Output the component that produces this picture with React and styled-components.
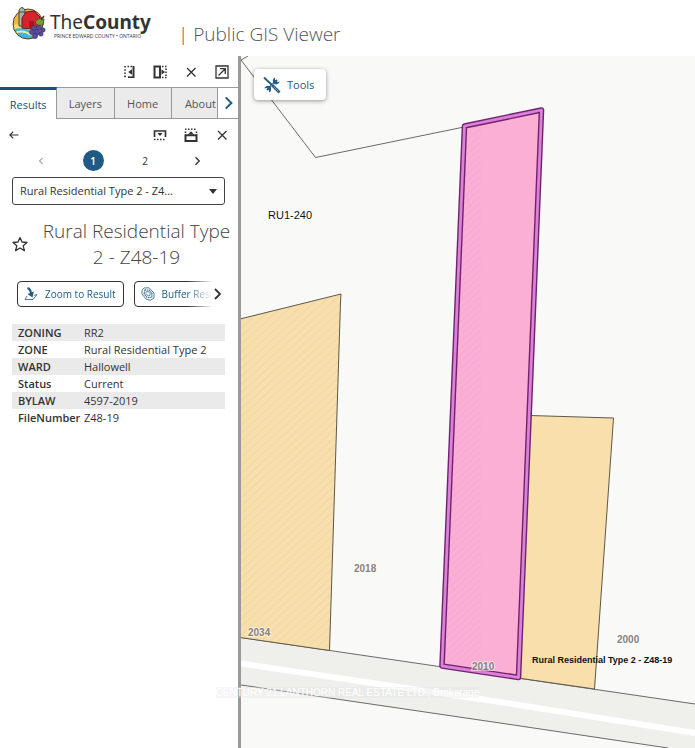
import React, { useState } from "react";
import styled, { createGlobalStyle } from "styled-components";

const rows = [
  ["ZONING", "RR2"],
  ["ZONE", "Rural Residential Type 2"],
  ["WARD", "Hallowell"],
  ["Status", "Current"],
  ["BYLAW", "4597-2019"],
  ["FileNumber", "Z48-19"],
];

const tabs = ["Results", "Layers", "Home", "About"];

const Logo = () => (
  <svg width="34" height="34" viewBox="0 0 34 34" aria-hidden="true">
    <defs>
      <clipPath id="badge">
        <circle cx="16" cy="18" r="15" />
      </clipPath>
    </defs>
    <g clipPath="url(#badge)">
      <rect width="34" height="34" fill="#f0b83c" />
      <path d="M0 20 Q8 16 16 21 T34 20 V34 H0Z" fill="#f6dc72" />
      <path d="M1 24 Q9 20 17 24 L22 34 H4Z" fill="#42b5d8" />
      <path d="M3 27 Q11 23 19 29" stroke="#f5e9a0" strokeWidth="2" fill="none" />
    </g>
    <circle cx="16" cy="18" r="15" fill="none" stroke="#4b4335" strokeWidth="1" />
    <path d="M7 20 V4 Q10 -1 13 4 V20Z" fill="#a9b6a0" stroke="#444" strokeWidth="1" />
    <path d="M7 6 H13" stroke="#444" strokeWidth="1" />
    <path d="M10 22 V12 L14 6 L22 5 L28 11 V21 L19 23Z" fill="#d8232e" stroke="#6b1b20" strokeWidth="1" />
    <path d="M17 22 V15 H22 V21" fill="#a9141f" />
    <path d="M23 16 Q26 11 32 13 L31 19 Q26 21 23 16Z" fill="#7e9a35" stroke="#4a5427" strokeWidth="1" />
    <path d="M29 14 L32 10" stroke="#4a4335" strokeWidth="1.5" />
    <g fill="#5a4c9c" stroke="#312a5e" strokeWidth="0.5">
      <circle cx="22" cy="22" r="2.6" />
      <circle cx="27" cy="22" r="2.6" />
      <circle cx="31" cy="24" r="2.2" />
      <circle cx="20" cy="26" r="2.6" />
      <circle cx="25" cy="26" r="2.6" />
      <circle cx="29" cy="28" r="2.2" />
      <circle cx="23" cy="30" r="2.6" />
    </g>
  </svg>
);

const Icon = ({ children, size = 16 }) => (
  <svg
    width={size}
    height={size}
    viewBox="0 0 16 16"
    fill="none"
    stroke="currentColor"
    strokeWidth="1.3"
    aria-hidden="true"
  >
    {children}
  </svg>
);

const DockIcon = () => (
  <Icon>
    <path d="M4 2 V14" strokeWidth="1.6" strokeDasharray="1.6 1.6" />
    <path d="M6.5 2.5 H12" strokeWidth="1.5" strokeDasharray="1.6 1.4" />
    <path d="M12.5 2 V14" strokeWidth="2" />
    <path d="M7 13.2 H12.5" strokeWidth="1.6" />
    <path d="M11 5.2 V10.8 L7.2 8Z" fill="currentColor" stroke="none" />
  </Icon>
);

const ExpandIcon = () => (
  <Icon>
    <path d="M2.5 2.5 H8 V13.5 H2.5Z" strokeWidth="2" />
    <path d="M10 2.5 H15 M10 13.5 H15 M14 4.5 V12" strokeWidth="1.6" strokeDasharray="1.5 1.5" />
    <path d="M9.5 5.2 V10.8 L13 8Z" fill="currentColor" stroke="none" />
  </Icon>
);

const CloseIcon = () => (
  <Icon>
    <path d="M4 4 L12.5 12.5 M12.5 4 L4 12.5" />
  </Icon>
);

const PopOutIcon = () => (
  <Icon>
    <path d="M2 2 H14 V14 H2Z M4.5 11.5 L11 5 M6 4.7 H11.3 V10" />
  </Icon>
);

const CollapseIcon = () => (
  <Icon>
    <path d="M2.5 10 V4 H13.5 V10" strokeWidth="1.7" />
    <path d="M2 12.5 H14" strokeWidth="1.5" strokeDasharray="1.5 1.5" />
    <path d="M5.3 6 H10.7 L8 9Z" fill="currentColor" stroke="none" />
  </Icon>
);

const RaiseIcon = () => (
  <Icon>
    <path d="M2.5 8.3 H13.5 V14 H2.5Z" strokeWidth="2" />
    <path d="M2 2.3 H14 M2.5 4.5 V8 M13.5 4.5 V8" strokeWidth="1.6" strokeDasharray="1.5 1.5" />
    <path d="M5 7.5 H11 L8 4.2Z" fill="currentColor" stroke="none" />
  </Icon>
);

const Chevron = ({ left, size = 16, heavy }) => (
  <Icon size={size}>
    <path d={left ? "M10 4 L6 8 L10 12" : "M6 3 L11 8 L6 13"} strokeWidth={heavy ? 1.8 : 1.5} />
  </Icon>
);

const ToolsIcon = () => (
  <svg width="18" height="18" viewBox="0 0 18 18" fill="none" stroke="#215b84" aria-hidden="true">
    <path d="M4 14 L14 4" strokeWidth="2.2" />
    <path d="M12 1.5 A3.5 3.5 0 1 0 16.7 5.5 L14 6.2 L12 4.3Z" fill="#215b84" stroke="none" />
    <path d="M6 16.5 A3.5 3.5 0 1 0 1.3 12.5 L4 11.8 L6 13.7Z" fill="#215b84" stroke="none" />
    <path d="M1 1.5 L9 9" strokeWidth="1.8" />
    <path d="M9 9 L16.5 16.5" stroke="#fff" strokeWidth="4" />
    <path d="M9 9 L16.5 16.5" strokeWidth="2.8" />
    <path d="M10.5 10.5 L15.5 15.5" stroke="#8fb0c6" strokeWidth="0.8" />
  </svg>
);

const ZoomIcon = () => (
  <svg width="14" height="14" viewBox="0 0 14 14" fill="none" stroke="#215b84" aria-hidden="true">
    <path d="M3 9 L1 12.5 H9 L13 7.5 L10 8.5" strokeWidth="0.8" />
    <path d="M3.5 1 Q6.5 2 7 6" strokeWidth="2" />
    <path d="M3.5 7 L9.8 4.5 L8.5 10.5Z" fill="#215b84" stroke="none" />
  </svg>
);

const BufferIcon = () => (
  <svg width="14" height="14" viewBox="0 0 14 14" fill="none" stroke="#215b84" aria-hidden="true">
    <path d="M3 1 L8 0.8 L13 6 L13 11 L9.5 13.3 L5 12 L1 7 L1 3Z" strokeWidth="0.8" />
    <path d="M4 3 L8 3 L11 6.5 L10.7 10 L8.5 11 L5.5 9.8 L3 6.5Z" strokeWidth="1.2" strokeDasharray="1.2 0.7" />
    <path d="M5.3 4.7 H7.8 L9.3 7 L8.5 9 L6.5 8.5 L4.8 6.5Z" strokeWidth="0.7" fill="#fff" />
  </svg>
);

const ParcelMap = () => (
  <MapDrawing viewBox="241 56 454 692" preserveAspectRatio="xMinYMin slice" role="img" aria-label="Parcel map">
    <defs>
      <pattern id="tanHatch" width="6" height="6" patternUnits="userSpaceOnUse" patternTransform="rotate(48)">
        <path d="M3 0 V6" stroke="#ecd6a6" strokeWidth="1" />
      </pattern>
      <pattern id="pinkHatch" width="5" height="5" patternUnits="userSpaceOnUse" patternTransform="rotate(48)">
        <path d="M2 0 V5" stroke="#f3a8d0" strokeWidth="1" />
      </pattern>
    </defs>
    <rect x="241" y="56" width="454" height="692" fill="#f9f9f7" />
    <path d="M241 637.5 L695 704 V752 L241 685Z" fill="#eff0eb" />
    <path d="M241 663.5 L500 702 L695 733" stroke="#fff" strokeWidth="6" fill="none" />
    <g fill="none" stroke="#6a6a66" strokeWidth="1">
      <path d="M248 56 L241 60 L315.5 157.5 L464 127" />
      <path d="M241 685 L500 723 L668 748" />
      <path d="M241 637.5 L695 704" />
    </g>
    <path d="M240 319 L341 294 L340.5 302 L329.5 650.5 L240 637.5Z" fill="#f8dfac" />
    <path d="M240 319 L341 294 L329.5 650.5 L240 637.5Z" fill="url(#tanHatch)" />
    <g stroke="#5e584a" strokeWidth="1">
      <path d="M240 319 L341 294 L340.5 302 L329.5 650.5 L240 637.5Z" fill="none" />
      <path d="M530 415.5 L613.5 418 L594.5 689 L518 678Z" fill="#f8dfab" />
    </g>
    <path d="M464.5 126 L541.5 110 L518.5 677.5 L442 666Z" fill="#fcafd5" />
    <path d="M465 126 L481 123 V670 L442 666Z" fill="url(#pinkHatch)" />
    <g fill="none" strokeLinejoin="round">
      <path d="M464.5 126 L541.5 110 L518.5 677.5 L442 666Z" stroke="#73206f" strokeWidth="5.6" />
      <path d="M464.5 126 L541.5 110 L518.5 677.5 L442 666Z" stroke="#da82d8" strokeWidth="2.8" />
    </g>
    <MapLabel x="268" y="219">RU1-240</MapLabel>
    <MapLabel x="354" y="572" $muted>2018</MapLabel>
    <MapLabel x="248" y="636" $muted>2034</MapLabel>
    <MapLabel x="472" y="670" $muted>2010</MapLabel>
    <MapLabel x="617" y="643" $muted>2000</MapLabel>
    <MapLabel x="532" y="663" $strong>Rural Residential Type 2 - Z48-19</MapLabel>
  </MapDrawing>
);

const App = () => {
  const [tab, setTab] = useState("Results");
  const [page, setPage] = useState(1);

  return (
    <Page>
      <GlobalStyle />
      <Header>
        <Logo />
        <Brand>
          <BrandName>
            The<b>County</b>
          </BrandName>
          <BrandSub>PRINCE EDWARD COUNTY • ONTARIO</BrandSub>
        </Brand>
        <SiteTitle>| Public GIS Viewer</SiteTitle>
      </Header>
      <Body>
        <Sidebar>
          <Toolbar>
            <IconButton aria-label="Dock panel"><DockIcon /></IconButton>
            <IconButton aria-label="Expand panel"><ExpandIcon /></IconButton>
            <IconButton aria-label="Close panel"><CloseIcon /></IconButton>
            <IconButton aria-label="Pop out"><PopOutIcon /></IconButton>
          </Toolbar>
          <Tabs>
            {tabs.map((name) => (
              <Tab key={name} $active={tab === name} onClick={() => setTab(name)}>
                {name}
              </Tab>
            ))}
            <TabScroll aria-label="More tabs"><Chevron size={18} heavy /></TabScroll>
          </Tabs>
          <Toolbar>
            <BackButton aria-label="Back">
              <Icon size={12}><path d="M3 8 H14 M7 3.5 L2.5 8 L7 12.5" strokeWidth="1.6" /></Icon>
            </BackButton>
            <IconButton aria-label="Collapse results"><CollapseIcon /></IconButton>
            <IconButton aria-label="Raise results"><RaiseIcon /></IconButton>
            <IconButton aria-label="Close results"><CloseIcon /></IconButton>
          </Toolbar>
          <Pager>
            <PageButton disabled={page === 1} onClick={() => setPage(1)} aria-label="Previous page">
              <Chevron left size={12} />
            </PageButton>
            <PageButton $current={page === 1} onClick={() => setPage(1)}>1</PageButton>
            <PageButton $current={page === 2} onClick={() => setPage(2)}>2</PageButton>
            <PageButton onClick={() => setPage(2)} aria-label="Next page">
              <Chevron size={12} heavy />
            </PageButton>
          </Pager>
          <SelectBox>
            <Select aria-label="Result">
              <option>Rural Residential Type 2 - Z4...</option>
            </Select>
            <svg width="8" height="5" viewBox="0 0 8 5" aria-hidden="true">
              <path d="M0 0 H8 L4 5Z" fill="#333" />
            </svg>
          </SelectBox>
          <ResultHead>
            <IconButton aria-label="Add to favourites">
              <Icon>
                <path
                  d="M8 1.5 L10 6 L15 6.5 L11.2 9.8 L12.4 14.6 L8 12 L3.6 14.6 L4.8 9.8 L1 6.5 L6 6Z"
                  strokeLinejoin="round"
                />
              </Icon>
            </IconButton>
            <ResultTitle>Rural Residential Type 2 - Z48-19</ResultTitle>
          </ResultHead>
          <Actions>
            <ActionList>
              <ActionButton><ZoomIcon />Zoom to Result</ActionButton>
              <ActionButton><BufferIcon />Buffer Results</ActionButton>
            </ActionList>
            <ActionScroll aria-label="More actions"><Chevron heavy /></ActionScroll>
          </Actions>
          <Table>
            <tbody>
              {rows.map(([name, value]) => (
                <tr key={name}>
                  <th scope="row">{name}</th>
                  <td>{value}</td>
                </tr>
              ))}
            </tbody>
          </Table>
        </Sidebar>
        <MapArea>
          <ParcelMap />
          <ToolsButton><ToolsIcon />Tools</ToolsButton>
        </MapArea>
      </Body>
      <Watermark>
        <span>CENTURY 21 LANTHORN REAL ESTATE LTD., Brokerage</span>
      </Watermark>
    </Page>
  );
};
export default App;

const GlobalStyle = createGlobalStyle`
  * {
    box-sizing: border-box;
  }
  body {
    margin: 0;
    background: #fff;
    color: #333;
    font-family: "Open Sans", "Noto Sans", sans-serif;
    font-size: 11px;
  }
  button, select {
    font: inherit;
    color: inherit;
    margin: 0;
    padding: 0;
    border: 0;
    background: none;
  }
`;
const Page = styled.div`
  position: relative;
  display: flex;
  flex-direction: column;
  min-height: 100vh;
`;
const Header = styled.header`
  display: flex;
  height: 56px;
  padding: 6px 12px 0;
`;
const Brand = styled.div`
  display: flex;
  flex-direction: column;
  width: 132px;
  padding: 5px 0 0 4px;
`;
const BrandName = styled.div`
  font-family: "Noto Sans", sans-serif;
  font-size: 19px;
  line-height: 22px;
  color: #333;
  b {
    font-weight: 700;
  }
`;
const BrandSub = styled.div`
  padding-left: 4px;
  font-size: 5px;
  line-height: 6px;
  white-space: nowrap;
`;
const SiteTitle = styled.h1`
  margin: 0;
  padding-top: 15px;
  font-size: 19px;
  font-weight: 300;
  line-height: 26px;
  white-space: nowrap;
  color: #555;
`;
const Body = styled.div`
  display: flex;
  flex: 1;
`;
const Sidebar = styled.aside`
  flex: none;
  width: 241px;
  border-right: 3px solid #999;
`;
const Toolbar = styled.div`
  display: flex;
  align-items: center;
  justify-content: flex-end;
  gap: 15px;
  height: 31px;
  padding: 0 8px;
`;
const IconButton = styled.button`
  display: flex;
  flex: none;
  width: 16px;
  height: 16px;
`;
const BackButton = styled(IconButton)`
  align-items: center;
  margin-right: auto;
`;
const Tabs = styled.div`
  display: flex;
  height: 32px;
`;
const Tab = styled.button`
  flex: 1 0 57px;
  height: 32px;
  border-top: ${(p) => (p.$active ? "3px solid #1d5078" : "1px solid #999")};
  border-right: 1px solid #999;
  border-bottom: ${(p) => (p.$active ? "0" : "1px solid #999")};
  background: ${(p) => (p.$active ? "#fff" : "#ebebeb")};
  color: ${(p) => (p.$active ? "#1d5078" : "#555")};
  &:nth-child(4) {
    flex: 1 1 46px;
    min-width: 0;
    padding-left: 12px;
  }
`;
const TabScroll = styled.button`
  display: flex;
  flex: none;
  align-items: center;
  justify-content: center;
  width: 20px;
  border-top: 1px solid #999;
  border-bottom: 1px solid #999;
  color: #215b84;
`;
const Pager = styled.nav`
  display: grid;
  grid-template-columns: repeat(4, 52px);
  justify-items: center;
  padding: 0 15px;
`;
const PageButton = styled.button`
  display: flex;
  align-items: center;
  justify-content: center;
  width: 21px;
  height: 21px;
  border-radius: 50%;
  background: ${(p) => (p.$current ? "#1f5a84" : "none")};
  color: ${(p) => (p.$current ? "#fff" : "#333")};
  font-size: 10px;
  font-weight: ${(p) => (p.$current ? 600 : 400)};
  &:disabled {
    color: #aaa;
  }
`;
const SelectBox = styled.div`
  display: flex;
  align-items: center;
  height: 28px;
  margin: 6px 13px 0 12px;
  padding-right: 7px;
  border: 1px solid #444;
  border-radius: 3px;
`;
const Select = styled.select`
  appearance: none;
  flex: 1;
  min-width: 0;
  height: 26px;
  padding: 0 0 2px 7px;
`;
const ResultHead = styled.div`
  display: flex;
  align-items: center;
  gap: 12px;
  margin-top: 13px;
  padding: 0 5px 0 12px;
`;
const ResultTitle = styled.h2`
  flex: 1;
  margin: 0;
  font-size: 19px;
  font-weight: 300;
  line-height: 26px;
  text-align: center;
  color: #444;
`;
const Actions = styled.div`
  display: flex;
  align-items: center;
  margin-top: 11px;
  padding-left: 17px;
`;
const ActionList = styled.div`
  display: flex;
  gap: 10px;
  width: 194px;
  overflow: hidden;
  mask-image: linear-gradient(to right, #000 170px, transparent 196px);
`;
const ActionButton = styled.button`
  display: flex;
  flex: none;
  align-items: center;
  gap: 7px;
  height: 26px;
  padding: 0 7px 0 6px;
  border: 1px solid #333;
  border-radius: 4px;
  color: #215b84;
  font-size: 10px;
  white-space: nowrap;
`;
const ActionScroll = styled.button`
  display: flex;
  margin-left: -2px;
`;
const Table = styled.table`
  width: 213px;
  margin: 17px 0 0 12px;
  border-collapse: collapse;
  line-height: 17px;
  th,
  td {
    padding: 0;
    text-align: left;
  }
  th {
    width: 72px;
    padding-left: 6px;
    font-weight: 600;
  }
  tr:nth-child(odd) {
    background: #eaeaea;
  }
`;
const MapArea = styled.main`
  position: relative;
  flex: 1;
  min-width: 0;
  overflow: hidden;
  background: #f9f9f7;
`;
const MapDrawing = styled.svg`
  display: block;
  width: 100%;
  height: 100%;
`;
const MapLabel = styled.text`
  font-family: "Liberation Sans", Arial, sans-serif;
  font-size: ${(p) => (p.$strong ? "9px" : p.$muted ? "10px" : "11px")};
  font-weight: ${(p) => (p.$strong || p.$muted ? 700 : 400)};
  fill: ${(p) => (p.$muted ? "#88807f" : "#111")};
  stroke: #fff;
  stroke-width: ${(p) => (p.$strong ? "0" : "2px")};
  stroke-opacity: 0.6;
  paint-order: stroke;
`;
const ToolsButton = styled.button`
  position: absolute;
  top: 13px;
  left: 13px;
  display: flex;
  align-items: center;
  gap: 6px;
  height: 31px;
  width: 72px;
  padding-left: 9px;
  border-radius: 4px;
  background: #fff;
  box-shadow: 0 1px 4px rgba(0, 0, 0, 0.4);
  color: #215b84;
`;
const Watermark = styled.div`
  position: absolute;
  top: 686px;
  left: 0;
  right: 0;
  text-align: center;
  line-height: 12px;
  pointer-events: none;
  span {
    background: rgba(225, 225, 225, 0.35);
    color: #fff;
    font-family: "Liberation Sans", Arial, sans-serif;
    font-size: 10px;
  }
`;
